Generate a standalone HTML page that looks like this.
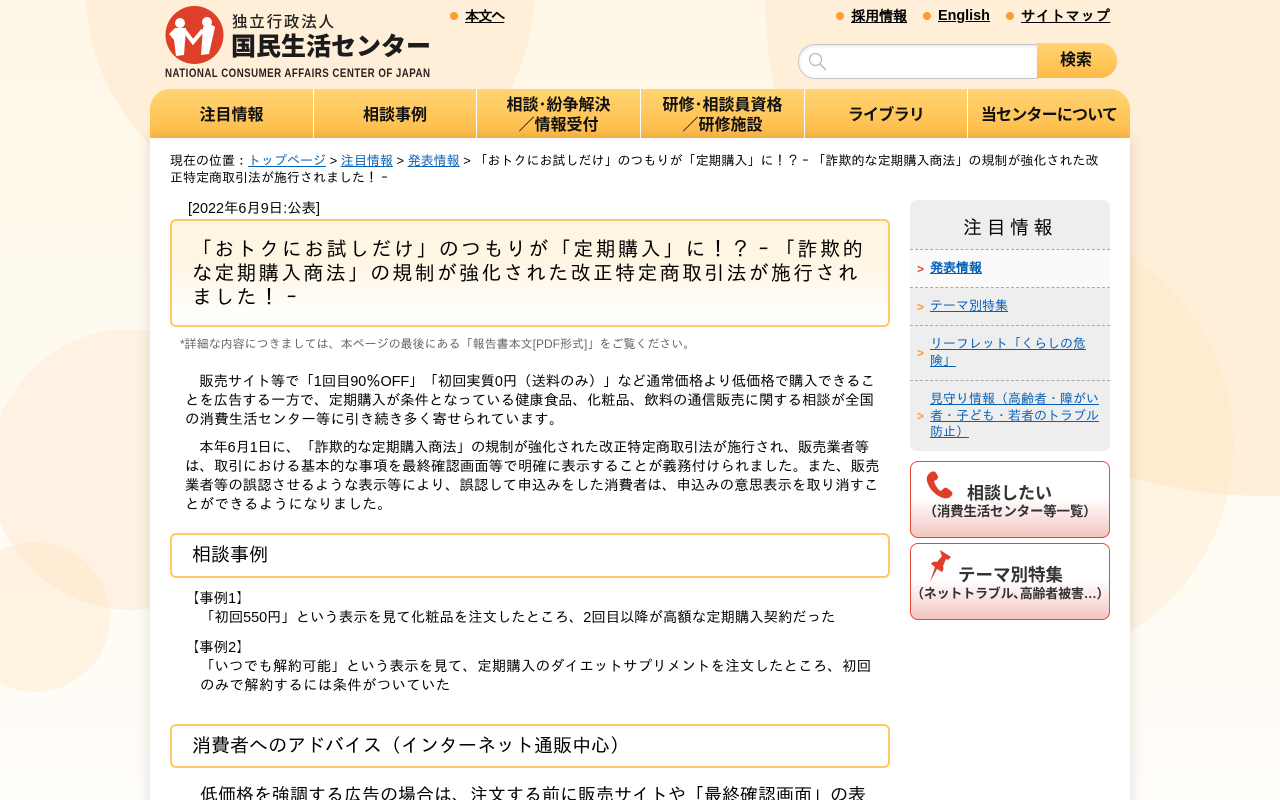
<!DOCTYPE html>
<html lang="ja"><head><meta charset="utf-8"><title>国民生活センター</title>
<style>
*{box-sizing:border-box}
html,body{margin:0;padding:0;height:800px;overflow:hidden}
body{position:relative;width:1280px;background:linear-gradient(#fff8e8,#fffdf9);font-family:"Liberation Sans","IPAGothic",sans-serif;color:#000}
.abs,.c,.t{position:absolute;white-space:nowrap}
.c{border-radius:50%}
a{color:#0860b8}
.n{font-family:"Liberation Sans","Noto Sans CJK JP",sans-serif}
.top a{color:#000;font-weight:bold;font-size:14.4px;line-height:18px}
.dot{position:absolute;width:8px;height:8px;border-radius:50%;background:#ff9a2e}
.dash{display:inline-block;transform:scaleX(.55)}
#nav{position:absolute;left:150px;top:89px;width:980px;height:49px;background:linear-gradient(#ffd473,#ffbb47);border-radius:20px 20px 0 0;font-family:"Liberation Sans","Noto Sans CJK JP",sans-serif}
#nav div{position:absolute;top:0;height:49px;border-right:1px solid #fff;display:flex;align-items:center;justify-content:center;text-align:center;font-weight:bold;font-size:16px;line-height:20px;color:#111;padding-top:4px}
#page{position:absolute;left:150px;top:138px;width:980px;height:700px;background:#fff;box-shadow:0 0 14px rgba(0,0,0,.13)}
.box{position:absolute;left:170px;width:720px;border:2px solid #ffc966;border-radius:6px;background:#fff}
.p{position:absolute;font-size:14.4px;line-height:19px;white-space:nowrap;color:#000}
.side{position:absolute;left:910px;width:200px;border-top:1px dashed #aaa;font-size:13px;line-height:16.5px;color:#0860b8}
.side a{position:absolute;left:20px}
.side i{position:absolute;left:7px;font-style:normal;font-weight:bold;font-size:12px;color:#ff9a2e}
.bn{position:absolute;left:910px;width:200px;border:1px solid #e24a35;border-radius:8px;background:linear-gradient(#fff 0,#fff 48%,#f3c5c0 100%);color:#333;font-weight:bold;text-align:center;font-family:"Liberation Sans","Noto Sans CJK JP",sans-serif}
</style></head><body>
<div class="c" style="left:85px;top:-238px;width:450px;height:450px;background:#ffefd8"></div>
<div class="c" style="left:765px;top:-505px;width:1000px;height:1001px;background:#ffefd8"></div>
<div class="c" style="left:790px;top:222px;width:444px;height:444px;background:rgba(255,225,190,.3)"></div>
<div class="c" style="left:-10px;top:329px;width:281px;height:281px;background:#fff2e2"></div>
<div class="c" style="left:-40px;top:542px;width:150px;height:150px;background:rgba(255,225,190,.35)"></div>

<svg class="abs" style="left:165px;top:6px" width="60" height="60" viewBox="0 0 60 60"><circle cx="29.500" cy="29" r="29" fill="#df3f28"/><circle cx="15" cy="17" r="5" fill="#fff"/><circle cx="42" cy="16" r="5" fill="#fff"/><path d="M10 22L4 28l5 6 2 16 8-1 2-27z" fill="#fff"/><path d="M38 21l-2 28 8-1 6-27c-3-3-9-3-12 0z" fill="#fff"/><path d="M19 24l9 12 10-12" fill="none" stroke="#fff" stroke-width="4"/></svg>
<div class="t n" style="left:232px;top:12px;font-size:15.500px;line-height:22px;font-weight:500;letter-spacing:1.800px;color:#222">独立行政法人</div>
<div class="t n" style="left:231px;top:32px;font-size:25px;line-height:30px;font-weight:900;color:#1c1c1c">国民生活センター</div>
<div class="t" style="left:165px;top:67px;font-size:11.500px;line-height:14px;font-weight:bold;letter-spacing:.560px;color:#2a2222;transform:scaleX(.844);transform-origin:0 0">NATIONAL CONSUMER AFFAIRS CENTER OF JAPAN</div>

<div class="top">
<span class="dot" style="left:450px;top:12px"></span><a class="abs" href="#" style="left:465px;top:8px;letter-spacing:-1.300px">本文へ</a>
<span class="dot" style="left:836px;top:12px"></span><a class="abs" href="#" style="left:851px;top:8px;letter-spacing:-.400px">採用情報</a>
<span class="dot" style="left:923px;top:12px"></span><a class="abs" href="#" style="left:938px;top:7px">English</a>
<span class="dot" style="left:1006px;top:12px"></span><a class="abs" href="#" style="left:1021px;top:8px;letter-spacing:.500px">サイトマップ</a>
</div>

<div class="abs" style="left:798px;top:44px;width:240px;height:35px;background:#fff;border:1px solid #c8c8c8;border-right:0;border-radius:17px 0 0 17px;box-shadow:inset 0 1px 3px rgba(0,0,0,.12)"></div>
<svg class="abs" style="left:808px;top:52px" width="20" height="20" viewBox="0 0 20 20"><circle cx="7.500" cy="7.500" r="6" fill="none" stroke="#bbb" stroke-width="1.300"/><path d="M12 12l6 6" stroke="#bbb" stroke-width="1.500"/></svg>
<div class="abs n" style="left:1037px;top:43px;width:80px;height:35px;background:linear-gradient(#ffd473,#ffbb47);border-radius:0 17px 17px 0;font-weight:bold;font-size:16px;line-height:35px;text-align:center;color:#111;padding-right:2px">検索</div>

<div id="nav">
<div style="left:0;width:164px">注目情報</div>
<div style="left:164px;width:163px">相談事例</div>
<div style="left:327px;width:164px">相談･紛争解決<br>／情報受付</div>
<div style="left:491px;width:164px">研修･相談員資格<br>／研修施設</div>
<div style="left:655px;width:163px;letter-spacing:-.700px">ライブラリ</div>
<div style="left:818px;width:162px;border:0;letter-spacing:-.800px">当センターについて</div>
</div>

<div id="page"></div>

<div class="t" style="left:170px;top:152px;font-size:13px;line-height:17px;color:#000">現在の位置：<a href="#">トップページ</a> &gt; <a href="#">注目情報</a> &gt; <a href="#">発表情報</a> &gt; 「おトクにお試しだけ」のつもりが「定期購入」に！？<span class="dash">－</span>「詐欺的な定期購入商法」の規制が強化された改<br>正特定商取引法が施行されました！<span class="dash">－</span></div>

<div class="t" style="left:188px;top:200px;font-size:14.400px;line-height:19px;color:#000">[2022年6月9日:公表]</div>

<div class="box" style="top:219px;height:108px;background:linear-gradient(#fff5e3 0,#fff5e3 40%,#fff 95%)"></div>
<div class="t" style="left:192px;top:238px;font-size:20px;line-height:24px;color:#000"><span style="letter-spacing:2.430px">「おトクにお試しだけ」のつもりが「定期購入」に！？<span class="dash">－</span>「詐欺的</span><br><span style="letter-spacing:2.270px">な定期購入商法」の規制が強化された改正特定商取引法が施行され</span><br><span style="letter-spacing:2.300px">ました！<span class="dash">－</span></span></div>

<div class="t" style="left:180px;top:336px;font-size:12px;line-height:16px;color:#666">*詳細な内容につきましては、本ページの最後にある「報告書本文[PDF形式]」をご覧ください。</div>

<div class="p" style="left:185px;top:373px"><span style="letter-spacing:-.080px">　販売サイト等で「1回目90％OFF」「初回実質0円（送料のみ）」など通常価格より低価格で購入できるこ</span><br><span style="letter-spacing:-.040px">とを広告する一方で、定期購入が条件となっている健康食品、化粧品、飲料の通信販売に関する相談が全国</span><br><span style="letter-spacing:.170px">の消費生活センター等に引き続き多く寄せられています。</span></div>
<div class="p" style="left:185px;top:439px"><span style="letter-spacing:-.170px">　本年6月1日に、「詐欺的な定期購入商法」の規制が強化された改正特定商取引法が施行され、販売業者等</span><br><span style="letter-spacing:.080px">は、取引における基本的な事項を最終確認画面等で明確に表示することが義務付けられました。また、販売</span><br><span style="letter-spacing:.060px">業者等の誤認させるような表示等により、誤認して申込みをした消費者は、申込みの意思表示を取り消すこ</span><br><span style="letter-spacing:.400px">とができるようになりました。</span></div>

<div class="box" style="top:533px;height:45px"></div>
<div class="t" style="left:192px;top:545px;font-size:19px;line-height:22px">相談事例</div>

<div class="p" style="left:185px;top:590px">【事例1】<br><span style="margin-left:15px;letter-spacing:-.020px">「初回550円」という表示を見て化粧品を注文したところ、2回目以降が高額な定期購入契約だった</span></div>
<div class="p" style="left:185px;top:639px;">【事例2】<br><span style="margin-left:15px;letter-spacing:.200px">「いつでも解約可能」という表示を見て、定期購入のダイエットサプリメントを注文したところ、初回</span><br><span style="margin-left:15px;letter-spacing:.350px">のみで解約するには条件がついていた</span></div>

<div class="box" style="top:724px;height:44px"></div>
<div class="t" style="left:192px;top:736px;font-size:19px;line-height:22px">消費者へのアドバイス（インターネット通販中心）</div>
<div class="t" style="left:200px;top:784px;font-size:18px;line-height:22px">低価格を強調する広告の場合は、注文する前に販売サイトや「最終確認画面」の表</div>

<div class="abs" style="left:910px;top:200px;width:200px;height:251px;background:#eee;border-radius:7px"></div>
<div class="t" style="left:910px;top:216px;width:200px;text-align:center;font-size:19px;line-height:25px;letter-spacing:4.500px">注目情報</div>
<div class="side" style="top:249px;height:39px;background:#fafafa"><i style="top:11px;color:#e24a35">&gt;</i><a href="#" style="top:10px;font-weight:bold">発表情報</a></div>
<div class="side" style="top:287px;height:38px"><i style="top:11px">&gt;</i><a href="#" style="top:10px">テーマ別特集</a></div>
<div class="side" style="top:325px;height:55px"><i style="top:19px">&gt;</i><a href="#" style="top:10px">リーフレット「くらしの危<br>険」</a></div>
<div class="side" style="top:380px;height:71px"><i style="top:27px">&gt;</i><a href="#" style="top:10px">見守り情報（高齢者・障がい<br>者・子ども・若者のトラブル<br>防止）</a></div>

<div class="bn" style="top:461px;height:77px"><span class="abs" style="left:56px;top:21px;font-size:17px;line-height:22px;color:#333">相談したい</span><span class="abs" style="left:8px;top:41px;width:182px;font-size:13.500px;line-height:17px;letter-spacing:-.200px">（消費生活センター等一覧）</span>
<svg class="abs" style="left:15px;top:9px" width="30" height="30" viewBox="0 0 30 30"><path d="M5 1C2 3 0 6 1 10c2 8 8 14 16 17 4 1 7 0 9-3 1-2 0-3-1-4l-4-3c-2-1-3 0-4 1l-2 2c-3-1-6-6-7-10l2-1c2-1 2-2 2-4L10 2C9 0 7 0 5 1z" fill="#df3f28"/></svg></div>
<div class="bn" style="top:543px;height:77px"><span class="abs" style="left:47px;top:20px;font-size:17.500px;line-height:22px;color:#333">テーマ別特集</span><span class="abs" style="left:0;top:41px;width:198px;font-size:13px;line-height:17px;letter-spacing:-.200px">（ネットトラブル､高齢者被害…）</span>
<svg class="abs" style="left:18px;top:5px" width="24" height="34" viewBox="0 0 24 34"><path d="M11 1l11 7-3 3-2-1-3 7c1 3 0 5-1 6L8 20 1 33l5-15-4-3c1-2 4-3 6-2l5-6-1-2z" fill="#df3f28"/></svg></div>
</body></html>
